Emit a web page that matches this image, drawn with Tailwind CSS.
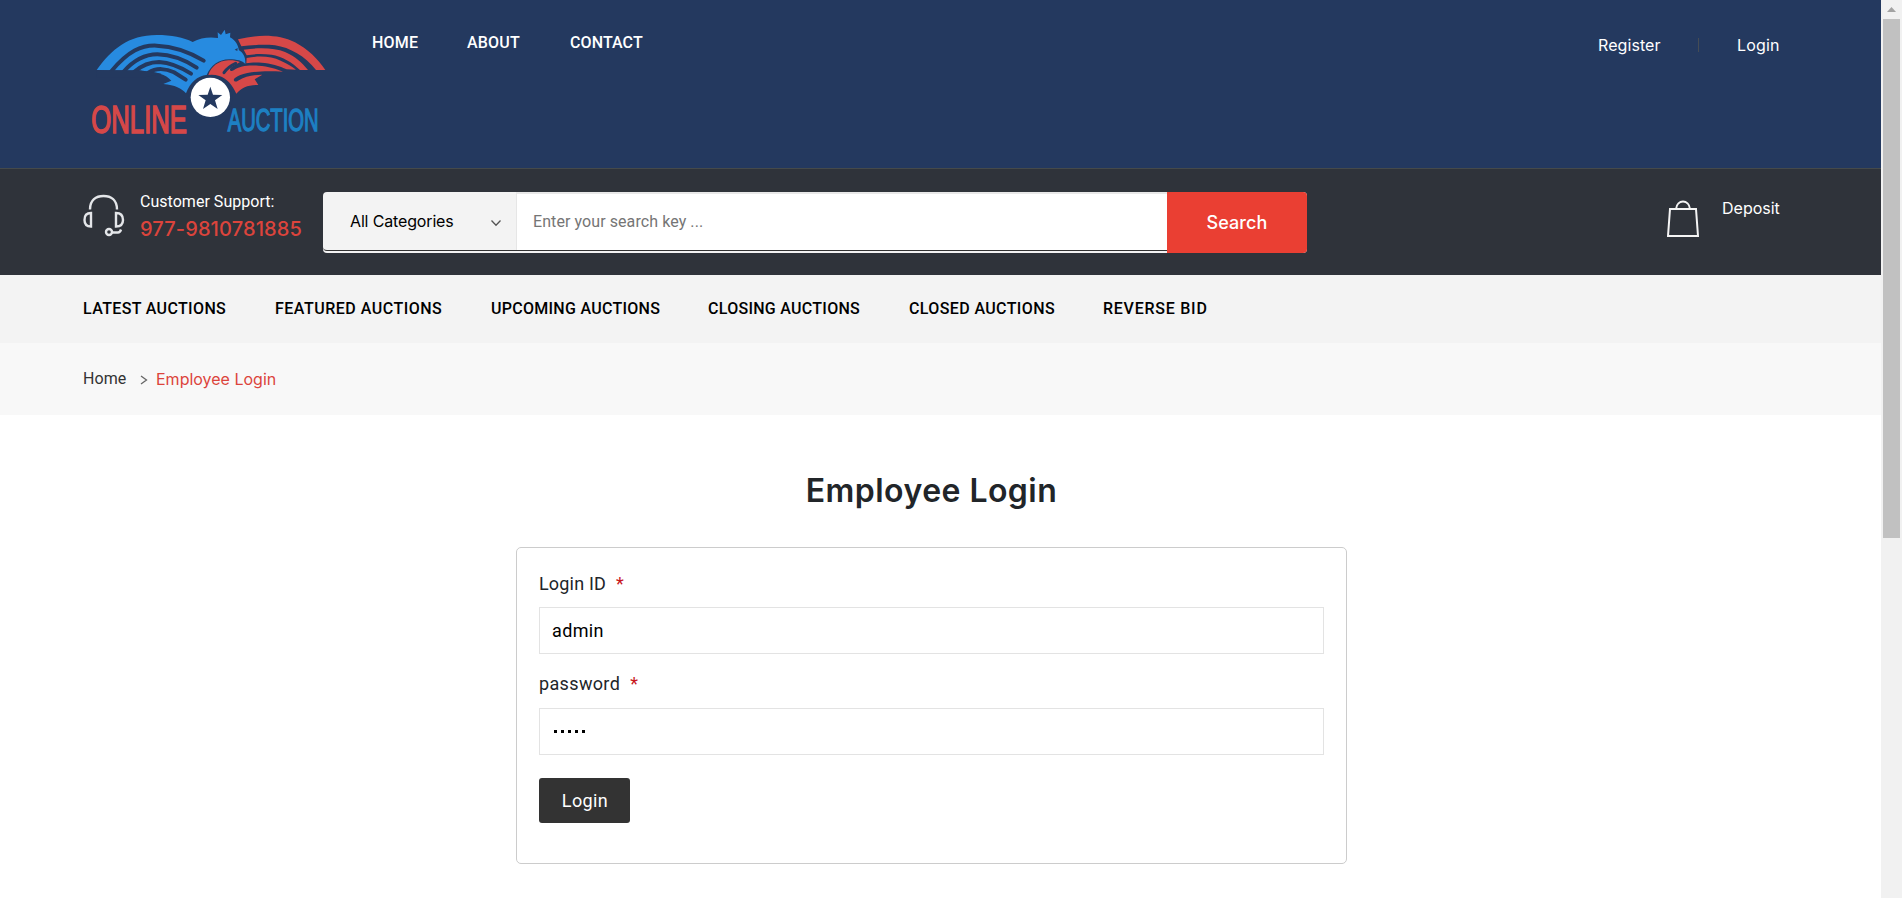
<!DOCTYPE html>
<html lang="en">
<head>
<meta charset="utf-8">
<title>Employee Login</title>
<script src="https://cdn.jsdelivr.net/npm/@tailwindcss/browser@4"></script>
</head>
<body class="flex h-[898px] overflow-hidden bg-white font-[Roboto,sans-serif] text-base leading-6">
<div class="w-[1881px]">

  <header class="flex h-[168px] bg-[#24395f] pl-[80px] text-white">
    <svg class="mt-5 h-[125px] w-[260px] shrink-0 overflow-visible" viewBox="0 0 780 375">
      <!-- left wing, neck and head -->
      <path fill="#278be0" d="M50 150C95 88 145 45 230 45C275 45 310 52 338 66C362 53 388 50 414 54L413 37L423 45L434 29L437 43L451 38L450 52C468 62 474 76 477 91C489 98 497 110 496 132C487 121 471 119 448 118C415 118 393 137 380 165C352 168 330 187 318 220C305 205 285 195 250 192L274 182C265 172 255 165 240 161C225 154 200 154 180 152Z"/>
      <g fill="none" stroke="#24395f" stroke-width="12" stroke-linecap="round">
        <path d="M92 156C145 92 185 75 230 77C285 79 330 97 371 122"/>
        <path d="M130 156C165 116 197 103 232 103C280 104 315 120 350 143"/>
        <path d="M162 156C190 132 212 126 237 126C275 128 303 142 333 161"/>
        <path d="M205 158C230 142 260 146 282 157L317 179"/>
      </g>
      <path fill="#24395f" d="M473 84l-9 5 8 4zM50 151H180L245 161 195 172H50z"/>
      <!-- right wing -->
      <path fill="#d64848" d="M474 58C535 43 595 42 645 67C683 87 713 116 736 150H708C675 108 630 83 585 76C550 73 515 75 484 79Z"/>
      <path fill="#d64848" d="M491 89C540 82 585 84 615 96C645 109 665 127 684 150H660C638 128 605 108 575 104C545 101 520 102 500 106Z"/>
      <path fill="#d64848" d="M500 114C540 106 575 110 602 122C622 131 637 140 648 149L620 148C600 138 570 130 545 128C525 126 510 128 499 130Z"/>
      <path fill="#d64848" d="M385 165C394 139 414 123 445 121C455 120 469 122 480 126L456 140C445 147 450 158 461 151C480 137 505 135 535 137C565 139 590 147 609 155C570 153 530 153 502 159C485 163 475 167 466 173C456 180 464 189 474 182C495 169 520 164 547 164L524 178L535 195C505 194 485 203 469 221C457 194 440 175 418 168Q402 163 385 165Z"/>
      <path fill="none" stroke="#24395f" stroke-width="9" stroke-linecap="round" d="M432 158Q443 141 467 130"/>
      <circle cx="391" cy="232" r="67" fill="#24395f"/>
      <circle cx="391" cy="232" r="59" fill="#fff"/>
      <path fill="#24395f" d="M391 200L399 224 427 225 405 241 413 267 391 252 369 267 377 241 355 225 383 224Z"/>
      <g font-family="Liberation Sans, sans-serif" stroke-width="5">
        <text x="34" y="340" font-size="115" textLength="287" lengthAdjust="spacingAndGlyphs" fill="#d64848" stroke="#d64848">ONLINE</text>
        <text x="443" y="332" font-size="94" textLength="273" lengthAdjust="spacingAndGlyphs" fill="#1d80c3" stroke="#1d80c3" stroke-width="4">AUCTION</text>
      </g>
    </svg>
    <nav class="flex pt-[31px] pl-[32px] font-medium whitespace-nowrap">
      <a class="w-[95px] tracking-[0.21px]">HOME</a>
      <a class="w-[103px] tracking-[0.2px]">ABOUT</a>
      <a class="tracking-[0.1px]">CONTACT</a>
    </nav>
    <div class="ml-auto flex w-[283px] pt-[33px] font-[Inter,sans-serif]">
      <a class="w-[100px] tracking-[0.08px]">Register</a>
      <span class="mt-[5px] h-[14px] w-px bg-[#454c55]"></span>
      <a class="ml-[38px] tracking-[0.17px]">Login</a>
    </div>
  </header>

  <section class="flex h-[107px] border-t border-[#454a4b] bg-[#2f333a] pl-[83px] text-white">
    <svg class="mt-[25px] h-[43px] w-[42px] shrink-0" viewBox="0 0 42 43" fill="none" stroke="#e4e6e9" stroke-width="2.400">
      <path d="M7 15.500C7 6 13 2 20.500 2S34 6 34 15.500"/>
      <path d="M8 19C3 19 1.500 22 1.500 26s1.500 6.500 6.500 6.500z"/>
      <path d="M33 19c5 0 7 3 7 7s-2 6.500-7 6.500z"/>
      <circle cx="26" cy="38" r="3"/>
      <path d="M29 38.500h6q2 0 3-3"/>
    </svg>
    <div class="w-[184px] pt-[21px] pl-[15px] whitespace-nowrap">
      <div class="tracking-[0.03px]">Customer Support:</div>
      <div class="mt-[3px] font-[Inter,sans-serif] text-xl leading-6 font-medium tracking-[0.12px] text-[#dc443c]">977-9810781885</div>
    </div>
    <form class="mt-[23px] ml-[14px] flex h-[61px] w-[984px] overflow-hidden rounded-[4px] bg-[#f3f3f3] text-black">
      <div class="flex min-w-0 flex-1 flex-col">
        <div class="flex h-[59px] rounded-bl-[4px] border-b border-[#333]">
          <div class="flex w-[194px] items-center border-r border-[#e6e6e6] pr-[14px] pl-[27px] font-[Inter,sans-serif]">
            <span class="tracking-[-0.15px]">All Categories</span>
            <svg class="mt-[3px] ml-auto h-[8px] w-[12px]" viewBox="0 0 12 8" fill="none" stroke="#555" stroke-width="1.300"><path d="M1.500 1.500 6 6.200l4.500-4.700"/></svg>
          </div>
          <div class="flex flex-1 items-center border-t-2 border-[#e8e8e8] bg-white pl-[16px] tracking-[0.08px] text-[#757575]">Enter your search key ...</div>
        </div>
      </div>
      <button class="w-[140px] bg-[#ea3f33] font-[Inter,sans-serif] text-lg font-medium tracking-[0.08px] text-white">Search</button>
    </form>
    <a class="ml-auto flex w-[214px]">
      <svg class="mt-[31px] h-[38px] w-[32px]" viewBox="0 0 32 38" fill="none" stroke="#f5f5f5" stroke-width="2">
        <path d="M3 9H29L31 36H1Z"/><path d="M9 9C10 -1 22 -1 23 9"/>
      </svg>
      <span class="ml-[23px] pt-[27px] font-[Inter,sans-serif]">Deposit</span>
    </a>
  </section>

  <nav class="flex h-[68px] bg-[#f3f3f3] pt-[22px] pl-[83px] font-medium whitespace-nowrap text-black">
    <a class="w-[192px] tracking-[0.36px]">LATEST AUCTIONS</a>
    <a class="w-[216px] tracking-[0.5px]">FEATURED AUCTIONS</a>
    <a class="w-[217px] tracking-[0.28px]">UPCOMING AUCTIONS</a>
    <a class="w-[201px] tracking-[0.28px]">CLOSING AUCTIONS</a>
    <a class="w-[194px] tracking-[0.38px]">CLOSED AUCTIONS</a>
    <a class="tracking-[0.75px]">REVERSE BID</a>
  </nav>

  <div class="flex h-[72px] bg-[#f8f8f8] pt-[24px] pl-[83px]">
    <a class="w-[57px] tracking-[0.05px] text-[#333]">Home</a>
    <svg class="mt-[8px] h-[10px] w-[8px]" viewBox="0 0 8 10" fill="none" stroke="#666" stroke-width="1.300"><path d="M1 1 6.500 5 1 9"/></svg>
    <span class="ml-[8px] font-[Inter,sans-serif] text-[#dc443c]">Employee Login</span>
  </div>

  <main class="pt-[57px] pl-[516px] text-[#212529]">
    <h1 class="w-[831px] text-center font-[Inter,sans-serif] text-[32px] leading-[38px] font-semibold tracking-[0.45px]">Employee Login</h1>
    <form class="mt-[37px] h-[317px] w-[831px] rounded-[5px] border border-[#ccc] pt-[24px] pl-[22px] text-lg">
      <label class="flex h-[24px] leading-6"><span class="tracking-[0.18px]">Login ID</span><span class="ml-[10px] text-[#c8161d]">*</span></label>
      <div class="mt-[11px] flex h-[47px] w-[785px] items-center border border-[#e3e3e3] pl-[12px] tracking-[0.35px] text-black">admin</div>
      <label class="mt-[18px] flex h-[24px] leading-6"><span class="tracking-[0.35px]">password</span><span class="ml-[10px] text-[#c8161d]">*</span></label>
      <div class="mt-[12px] flex h-[47px] w-[785px] items-center gap-[4px] border border-[#e3e3e3] pl-[14px]">
        <i class="size-[3px] bg-black"></i><i class="size-[3px] bg-black"></i><i class="size-[3px] bg-black"></i><i class="size-[3px] bg-black"></i><i class="size-[3px] bg-black"></i>
      </div>
      <button class="mt-[23px] block h-[45px] w-[91px] rounded-[3px] bg-[#333] pl-px tracking-[0.39px] text-white">Login</button>
    </form>
  </main>
</div>

<aside class="flex w-[21px] flex-col items-center bg-[#f1f1f1]">
  <svg class="mt-[7px] h-[5px] w-[9px]" viewBox="0 0 9 5"><path fill="#a3a3a3" d="M0 5 4.500 0 9 5z"/></svg>
  <div class="mt-[7px] h-[519px] w-[17px] bg-[#c1c1c1]"></div>
</aside>
</body>
</html>
